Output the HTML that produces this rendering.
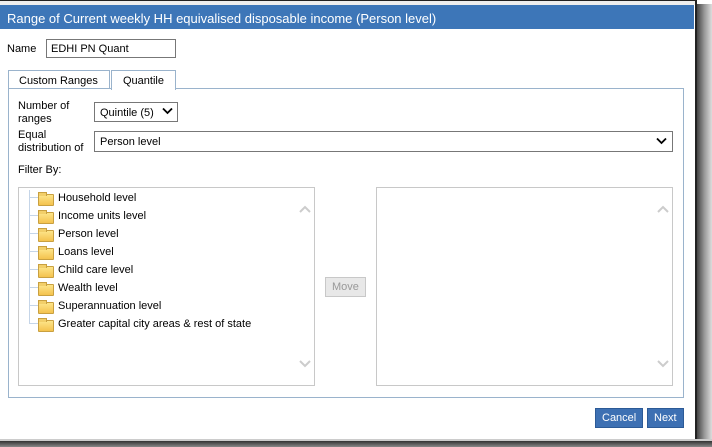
<!DOCTYPE html><html><head><style>
body{margin:0;width:712px;height:447px;background:#fff;position:relative;overflow:hidden;font-family:"Liberation Sans",Arial,sans-serif;font-size:11px;color:#000}
div,span{position:absolute;box-sizing:border-box}
.t{white-space:nowrap;margin-top:1px}
.f{width:16px;height:12px;background:linear-gradient(#fde58a,#f4c24e);border:1px solid #c9a040;border-radius:1px}
.f:before{content:"";position:absolute;left:-1px;top:-3px;width:7px;height:3px;background:#f2cf6a;border:1px solid #c9a040;border-bottom:none}
</style></head><body>
<div style="left:0;top:0;width:697px;height:439px;background:#fff;border-right:2px solid #222;border-top:1px solid #222"></div>
<div style="left:697px;top:4px;width:15px;height:443px;background:linear-gradient(90deg,#444,#999,#ddd)"></div>
<div style="left:0;top:439px;width:712px;height:2px;background:#ccc"></div>
<div style="left:0;top:441px;width:712px;height:6px;background:linear-gradient(#333,#888)"></div>
<div style="left:0;top:1px;width:695px;height:4px;background:#eee"></div>
<div style="left:0;top:5px;width:694px;height:24px;background:#3d76b8"></div>
<span class="t" style="left:7px;top:10px;color:#fff;font-size:13px">Range of Current weekly HH equivalised disposable income (Person level)</span>
<span class="t" style="left:7px;top:42px">Name</span>
<div style="left:46px;top:39px;width:130px;height:19px;border:1px solid #777"></div>
<span class="t" style="left:51px;top:42px">EDHI PN Quant</span>
<div style="left:8px;top:88px;width:676px;height:310px;border:1px solid #9ab3cc"></div>
<div style="left:8px;top:70px;width:102px;height:19px;border:1px solid #9ab3cc;background:#fff"></div>
<span class="t" style="left:19px;top:74px">Custom Ranges</span>
<div style="left:111px;top:70px;width:65px;height:20px;border:1px solid #9ab3cc;border-bottom:none;background:#fff"></div>
<span class="t" style="left:123px;top:74px">Quantile</span>
<span class="t" style="left:18px;top:99px;line-height:13px">Number of<br>ranges</span>
<div style="left:94px;top:102px;width:84px;height:20px;border:1px solid #777"></div>
<span class="t" style="left:100px;top:106px">Quintile (5)</span>
<svg style="position:absolute;left:162px;top:107px" width="11" height="8"><path d="M1 1.5L5.5 6 10 1.5" fill="none" stroke="#000" stroke-width="1.8"/></svg>
<span class="t" style="left:18px;top:128px;line-height:13px">Equal<br>distribution of</span>
<div style="left:94px;top:131px;width:579px;height:21px;border:1px solid #777"></div>
<span class="t" style="left:100px;top:135px">Person level</span>
<svg style="position:absolute;left:656px;top:137px" width="11" height="8"><path d="M1 1.5L5.5 6 10 1.5" fill="none" stroke="#000" stroke-width="1.8"/></svg>
<span class="t" style="left:18px;top:163px">Filter By:</span>
<div style="left:18px;top:187px;width:297px;height:199px;border:1px solid #c8c8c8"></div>
<div style="left:376px;top:187px;width:297px;height:199px;border:1px solid #c8c8c8"></div>
<div style="left:29px;top:190px;width:1px;height:134px;background:#c5d5e8"></div>
<svg style="position:absolute;left:299px;top:205px" width="12" height="8"><path d="M1 7L6 2 11 7" fill="none" stroke="#ccc" stroke-width="2"/></svg>
<svg style="position:absolute;left:299px;top:360px" width="12" height="8"><path d="M1 1L6 6 11 1" fill="none" stroke="#ccc" stroke-width="2"/></svg>
<svg style="position:absolute;left:657px;top:205px" width="12" height="8"><path d="M1 7L6 2 11 7" fill="none" stroke="#ccc" stroke-width="2"/></svg>
<svg style="position:absolute;left:657px;top:360px" width="12" height="8"><path d="M1 1L6 6 11 1" fill="none" stroke="#ccc" stroke-width="2"/></svg>
<div style="left:325px;top:277px;width:41px;height:20px;border:1px solid #c8c8c8;background:#e8e8e8"></div>
<span class="t" style="left:332px;top:280px;color:#999">Move</span>
<div style="left:595px;top:408px;width:48px;height:20px;background:#3d70b3;border:1px solid #2c5a96"></div>
<span class="t" style="left:602px;top:411px;color:#fff">Cancel</span>
<div style="left:647px;top:408px;width:37px;height:20px;background:#3d70b3;border:1px solid #2c5a96"></div>
<span class="t" style="left:654px;top:411px;color:#fff">Next</span>
<div style="left:29px;top:197px"><div style="left:0;top:0;width:9px;height:1px;background:#c5d5e8"></div><div class="f" style="left:9px;top:-3px"></div><span class="t" style="left:29px;top:-6px">Household level</span></div>
<div style="left:29px;top:215px"><div style="left:0;top:0;width:9px;height:1px;background:#c5d5e8"></div><div class="f" style="left:9px;top:-3px"></div><span class="t" style="left:29px;top:-6px">Income units level</span></div>
<div style="left:29px;top:233px"><div style="left:0;top:0;width:9px;height:1px;background:#c5d5e8"></div><div class="f" style="left:9px;top:-3px"></div><span class="t" style="left:29px;top:-6px">Person level</span></div>
<div style="left:29px;top:251px"><div style="left:0;top:0;width:9px;height:1px;background:#c5d5e8"></div><div class="f" style="left:9px;top:-3px"></div><span class="t" style="left:29px;top:-6px">Loans level</span></div>
<div style="left:29px;top:269px"><div style="left:0;top:0;width:9px;height:1px;background:#c5d5e8"></div><div class="f" style="left:9px;top:-3px"></div><span class="t" style="left:29px;top:-6px">Child care level</span></div>
<div style="left:29px;top:287px"><div style="left:0;top:0;width:9px;height:1px;background:#c5d5e8"></div><div class="f" style="left:9px;top:-3px"></div><span class="t" style="left:29px;top:-6px">Wealth level</span></div>
<div style="left:29px;top:305px"><div style="left:0;top:0;width:9px;height:1px;background:#c5d5e8"></div><div class="f" style="left:9px;top:-3px"></div><span class="t" style="left:29px;top:-6px">Superannuation level</span></div>
<div style="left:29px;top:323px"><div style="left:0;top:0;width:9px;height:1px;background:#c5d5e8"></div><div class="f" style="left:9px;top:-3px"></div><span class="t" style="left:29px;top:-6px">Greater capital city areas &amp; rest of state</span></div>
</body></html>
